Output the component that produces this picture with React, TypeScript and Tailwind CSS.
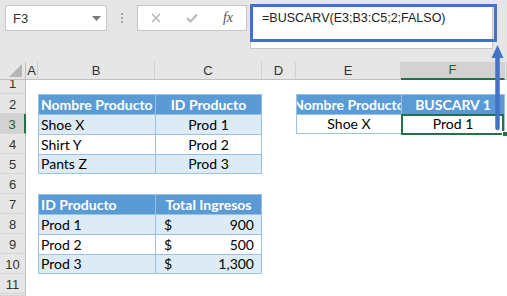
import type { ReactNode } from 'react'

type Cell = { text?: ReactNode; cls?: string; sel?: boolean }

const colW = ['w-[12px]', 'w-[117px]', 'w-[107px]', 'w-[34px]', 'w-[105px]', 'w-[104px]', 'w-[2px]']
const colNames = ['A', 'B', 'C', 'D', 'E', 'F', '']

const TH = 'bg-[#5b9bd5] text-white font-bold border-l border-t border-[#9bc2e6]'
const BAND = 'bg-[#ddebf7] border-l border-t border-[#9bc2e6]'
const PLAIN = 'bg-white border-l border-t border-[#9bc2e6]'

const money = (v: string) => (
  <>
    <span>$</span>
    <span>{v}</span>
  </>
)

const rows: { n: number; h: string; shift?: boolean; cells: Cell[] }[] = [
  { n: 1, h: 'h-[14px]', shift: true, cells: [] },
  {
    n: 2, h: 'h-[20px]', cells: [
      {},
      { text: 'Nombre Producto', cls: `${TH} justify-start pl-[2px]` },
      { text: 'ID Producto', cls: `${TH} border-r justify-center` },
      {},
      { text: 'Nombre Producto', cls: `${TH} justify-center` },
      { text: 'BUSCARV 1', cls: `${TH} border-r justify-center` },
    ],
  },
  {
    n: 3, h: 'h-[20px]', cells: [
      {},
      { text: 'Shoe X', cls: `${BAND} justify-start pl-[2px]` },
      { text: 'Prod 1', cls: `${BAND} border-r justify-center` },
      {},
      { text: 'Shoe X', cls: `${PLAIN} border-b justify-center` },
      { text: 'Prod 1', cls: `${PLAIN} border-b border-r justify-center`, sel: true },
    ],
  },
  {
    n: 4, h: 'h-[20px]', cells: [
      {},
      { text: 'Shirt Y', cls: `${PLAIN} justify-start pl-[2px]` },
      { text: 'Prod 2', cls: `${PLAIN} border-r justify-center` },
    ],
  },
  {
    n: 5, h: 'h-[20px]', cells: [
      {},
      { text: 'Pants Z', cls: `${BAND} border-b justify-start pl-[2px]` },
      { text: 'Prod 3', cls: `${BAND} border-b border-r justify-center` },
    ],
  },
  { n: 6, h: 'h-[20px]', cells: [] },
  {
    n: 7, h: 'h-[20px]', cells: [
      {},
      { text: 'ID Producto', cls: `${TH} justify-start pl-[2px]` },
      { text: 'Total Ingresos', cls: `${TH} border-r justify-center` },
    ],
  },
  {
    n: 8, h: 'h-[20px]', cells: [
      {},
      { text: 'Prod 1', cls: `${BAND} justify-start pl-[2px]` },
      { text: money('900'), cls: `${BAND} border-r justify-between pl-[8px] pr-[7px]` },
    ],
  },
  {
    n: 9, h: 'h-[20px]', cells: [
      {},
      { text: 'Prod 2', cls: `${PLAIN} justify-start pl-[2px]` },
      { text: money('500'), cls: `${PLAIN} border-r justify-between pl-[8px] pr-[7px]` },
    ],
  },
  {
    n: 10, h: 'h-[20px]', cells: [
      {},
      { text: 'Prod 3', cls: `${BAND} border-b justify-start pl-[2px]` },
      { text: money('1,300'), cls: `${BAND} border-b border-r justify-between pl-[8px] pr-[7px]` },
    ],
  },
  { n: 11, h: 'h-[20px]', cells: [] },
  { n: 12, h: 'h-[2px]', cells: [] },
]

function Toolbar() {
  return (
    <div className="relative flex h-[62px] items-start bg-[#e6e6e6]">
      {/* name box */}
      <div className="ml-[5px] mt-[5px] flex h-[26px] w-[102px] items-center justify-between border border-[#c6c6c6] bg-white pl-[7px] pr-[5px]">
        <span className="text-[13px] leading-none text-[#333]">F3</span>
        <svg width="9" height="5" viewBox="0 0 9 5">
          <path d="M0 0h9L4.5 5z" fill="#7a7a7a" />
        </svg>
      </div>
      <div className="mt-[5px] flex h-[26px] w-[30px] flex-col items-center justify-center gap-[2px]">
        <span className="h-[2px] w-[2px] bg-[#a6a6a6]" />
        <span className="h-[2px] w-[2px] bg-[#a6a6a6]" />
        <span className="h-[2px] w-[2px] bg-[#a6a6a6]" />
      </div>
      {/* cancel / enter / fx */}
      <div className="mt-[5px] flex h-[26px] w-[110px] items-center border border-[#c6c6c6] bg-white">
        <div className="flex w-[36px] justify-center">
          <svg width="10" height="10" viewBox="0 0 10 10">
            <path d="M1 1l8 8M9 1L1 9" stroke="#b3b3b3" strokeWidth="1.4" />
          </svg>
        </div>
        <div className="flex w-[36px] justify-center">
          <svg width="12" height="10" viewBox="0 0 12 10">
            <path d="M1 5l3.5 3.5L11 1.5" stroke="#b8b8b8" strokeWidth="2" fill="none" />
          </svg>
        </div>
        <div className="flex w-[36px] justify-center">
          <span className="font-['Liberation_Serif',serif] text-[14px] italic leading-none text-[#555]">fx</span>
        </div>
      </div>
      {/* formula bar */}
      <div className="ml-[3px] mt-[4px] h-[45px] w-[243px] border border-[#c6c6c6] bg-white pl-[11px] pt-[6px]">
        <span className="block whitespace-nowrap text-[12.5px] leading-[15px] text-[#222]">
          =BUSCARV(E3;B3:C5;2;FALSO)
        </span>
      </div>
      <div className="pointer-events-none absolute left-[250px] top-[4px] h-[38px] w-[247px] border-[3px] border-[#4472c4]" />
    </div>
  )
}

function ColumnHeader() {
  return (
    <div className="flex h-[18px] bg-[#e6e6e6]">
      <div className="flex h-full w-[26px] shrink-0 items-end justify-end border-b border-r border-[#bfbfbf] pb-[2px] pr-[3px]">
        <svg width="13" height="13" viewBox="0 0 13 13">
          <path d="M13 0V13H0z" fill="#b5b5b5" />
        </svg>
      </div>
      {colNames.map((c, i) => (
        <div
          key={i}
          className={`flex h-full shrink-0 items-center justify-center border-r text-[13px] ${colW[i]} ${
            c === 'F'
              ? 'border-b-2 border-r-[#d0d0d0] border-b-[#217346] bg-[#d2d2d2] text-[#1d5e38]'
              : 'border-b border-r-[#d0d0d0] border-b-[#bfbfbf] text-[#333]'
          }`}
        >
          {c}
        </div>
      ))}
    </div>
  )
}

export default function App() {
  return (
    <div className="relative h-[296px] w-[507px] overflow-hidden bg-white font-['Liberation_Sans',Arial,sans-serif]">
      <Toolbar />
      <ColumnHeader />
      {rows.map((r) => (
        <div key={r.n} className={`flex ${r.h}`}>
          <div
            className={`flex h-full w-[26px] shrink-0 justify-center overflow-hidden border-b border-b-[#d5d5d5] text-[13px] ${
              r.n === 3
                ? 'border-r-2 border-r-[#217346] bg-[#d2d2d2] text-[#1d5e38]'
                : 'border-r border-r-[#bfbfbf] bg-[#e6e6e6] text-[#333]'
            }`}
          >
            <span className={`block h-[20px] shrink-0 leading-[20px] ${r.shift ? '-mt-[6px]' : 'mt-[1px]'}`}>{r.n}</span>
          </div>
          {colW.map((w, i) => {
            const cell = r.cells[i] ?? {}
            return (
              <div
                key={i}
                className={`relative flex h-full shrink-0 items-end whitespace-nowrap pb-[1px] font-['Lato',sans-serif] text-[14px] leading-[16px] text-black ${w} ${
                  cell.sel ? '' : 'overflow-hidden'
                } ${cell.cls ?? ''}`}
              >
                {cell.text}
                {cell.sel && (
                  <>
                    <div className="pointer-events-none absolute left-[-1px] top-[-1px] z-10 h-[21px] w-[103px] border-2 border-[#217346]" />
                    <div className="absolute left-[100px] top-[16px] z-10 h-[6px] w-[6px] border border-white bg-[#217346]" />
                  </>
                )}
              </div>
            )
          })}
        </div>
      ))}
      {/* arrow from result cell to formula bar */}
      <svg className="pointer-events-none absolute left-[488px] top-[40px] z-20" width="18" height="95" viewBox="0 0 18 95">
        <path d="M9.5 16V88" stroke="#4472c4" strokeWidth="4.5" strokeLinecap="round" />
        <path d="M9.5 5L3.5 18H15.5z" fill="#4472c4" />
      </svg>
    </div>
  )
}
